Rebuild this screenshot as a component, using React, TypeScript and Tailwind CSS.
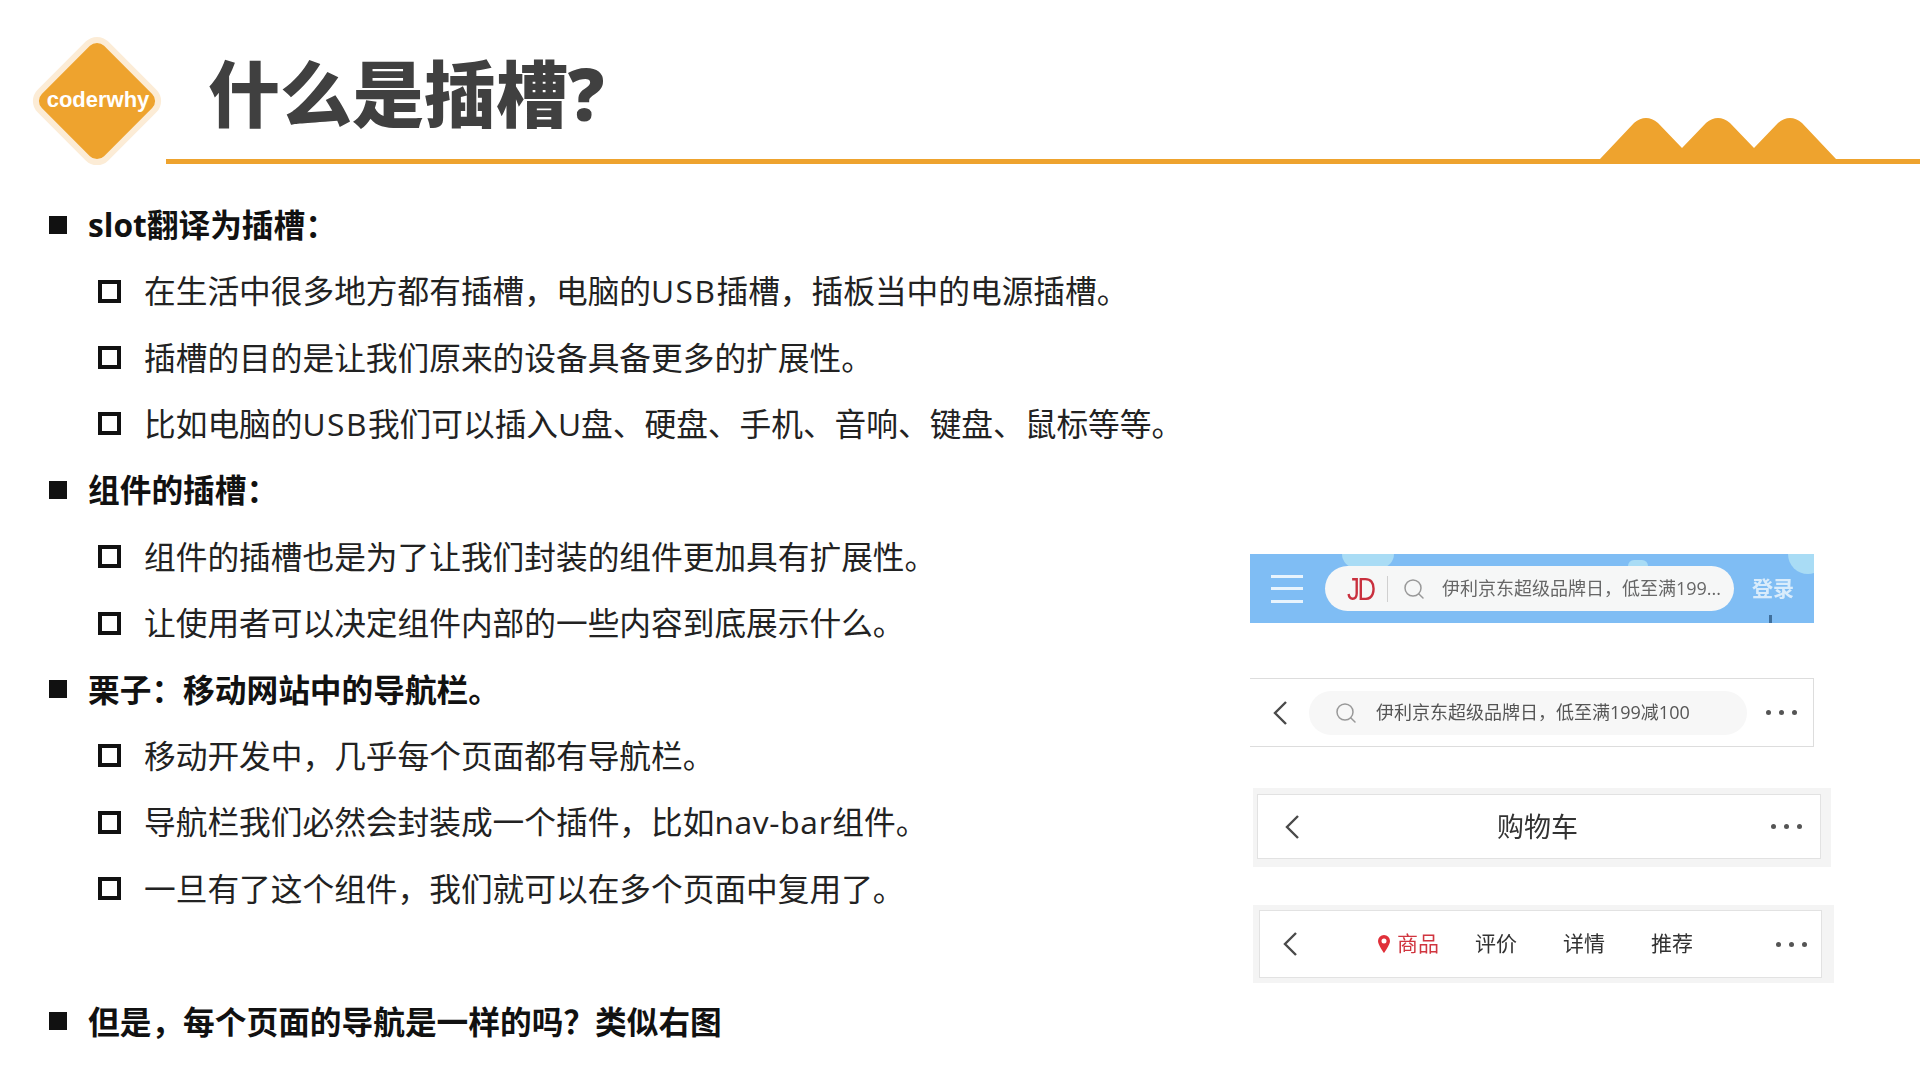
import type { ReactNode } from 'react'
import { Search } from 'lucide-react'

const cjk = "font-['Open_Sans','Noto_Sans_CJK_SC',sans-serif]"

const Dots = () => (
  <div className="flex gap-[8px]">
    {Array.from({ length: 3 }).map((_, i) => (
      <div key={i} className="h-[5px] w-[5px] rounded-full bg-[#555]" />
    ))}
  </div>
)

const Back = () => (
  <svg className="shrink-0" width="16" height="26" viewBox="0 0 16 26">
    <path d="M14 2 L3 13 L14 24" fill="none" stroke="#4a4a4a" strokeWidth="2.4" />
  </svg>
)

const Head = ({ children }: { children: ReactNode }) => (
  <div className="flex h-[66.4px] items-center pl-[49px]">
    <div className="h-[18px] w-[18px] bg-[#111]" />
    <div className="ml-[21px] text-[31.7px] font-bold text-[#111]">{children}</div>
  </div>
)

const Item = ({ children }: { children: ReactNode }) => (
  <div className="flex h-[66.4px] items-center pl-[98px]">
    <div className="h-[23px] w-[23px] border-[4px] border-[#111]" />
    <div className="ml-[23px] text-[31.7px] text-[#222]">{children}</div>
  </div>
)

export default function App() {
  return (
    <div className={`${cjk} h-[1080px] w-[1920px] overflow-hidden bg-white`}>
      {/* Header */}
      <div className="relative h-[163px]">
        <div className="flex items-start pt-[37px]">
          <div className="relative ml-[33px] flex h-[127px] w-[127px] items-center justify-center">
            <div className="absolute h-[100px] w-[100px] rotate-45 rounded-[16px] border-[6px] border-[#fcecd6] bg-[#eea32e]" />
            <div className="relative pb-[2px] pl-[3px] font-['Liberation_Sans',sans-serif] text-[22px] font-bold text-white">coderwhy</div>
          </div>
          <div className="ml-[48px] mt-[2px] text-[72px] leading-[108px] font-black text-[#404040]">什么是插槽?</div>
        </div>
        <div className="absolute bottom-[-1px] left-[166px] right-0 h-[5px] bg-[#eea32e]" />
        <svg className="absolute left-[1598px] top-[117px]" width="238" height="47" viewBox="0 0 238 47">
          <path
            d="M2 42 L36 6 Q48 -4 60 6 L84 31 L108 6 Q120 -4 132 6 L156 31 L180 6 Q192 -4 204 6 L238 42 V47 H2 Z"
            fill="#eea32e"
          />
        </svg>
      </div>

      {/* Content */}
      <div className="flex pt-[28.5px]">
        <div className="w-[1250px] shrink-0">
          <Head>slot翻译为插槽：</Head>
          <Item>在生活中很多地方都有插槽，电脑的<span className="tracking-[1.5px]">USB</span>插槽，插板当中的电源插槽。</Item>
          <Item>插槽的目的是让我们原来的设备具备更多的扩展性。</Item>
          <Item>比如电脑的<span className="tracking-[1.5px]">USB</span>我们可以插入U盘、硬盘、手机、音响、键盘、鼠标等等。</Item>
          <Head>组件的插槽：</Head>
          <Item>组件的插槽也是为了让我们封装的组件更加具有扩展性。</Item>
          <Item>让使用者可以决定组件内部的一些内容到底展示什么。</Item>
          <Head>栗子：移动网站中的导航栏。</Head>
          <Item>移动开发中，几乎每个页面都有导航栏。</Item>
          <Item>导航栏我们必然会封装成一个插件，比如<span className="tracking-[0.7px]">nav-bar</span>组件。</Item>
          <Item>一旦有了这个组件，我们就可以在多个页面中复用了。</Item>
          <div className="h-[66.4px]" />
          <Head>但是，每个页面的导航是一样的吗？类似右图</Head>
        </div>

        {/* Nav bar pictures */}
        <div className="flex w-[600px] flex-col pt-[362.5px] blur-[0.4px]">
          <div className="relative flex h-[69px] w-[564px] items-center overflow-hidden bg-[#7fbdf4] pl-[21px]">
            <div className="absolute left-[92px] top-[-14px] h-[28px] w-[52px] rounded-full bg-[#a9dcf5]" />
            <div className="absolute left-[378px] top-[6px] h-[12px] w-[20px] rounded-full bg-[#a9dcf5]" />
            <div className="absolute right-[-14px] top-[-20px] h-[40px] w-[40px] rounded-full bg-[#a9dcf5]" />
            <div className="absolute bottom-0 left-[519px] h-[8px] w-[3px] bg-[#3f6f9c]" />
            <div className="relative flex w-[32px] flex-col gap-[9.5px]">
              <div className="h-[3px] bg-[#e8f4fd]" />
              <div className="h-[3px] bg-[#e8f4fd]" />
              <div className="h-[3px] bg-[#e8f4fd]" />
            </div>
            <div className="relative ml-[22px] flex h-[45px] w-[409px] items-center rounded-full bg-[#f6f7f7] pl-[22px]">
              <div className="w-[29px] origin-left scale-x-[0.8] font-['Liberation_Sans',sans-serif] text-[32px] tracking-[-3px] text-[#c9303e]">JD</div>
              <div className="ml-[11px] h-[26px] w-px bg-[#d0d0d0]" />
              <Search className="ml-[14px] text-[#999]" size={24} strokeWidth={1.5} />
              <div className="ml-[16px] whitespace-nowrap text-[18px] text-[#666]">伊利京东超级品牌日，低至满199...</div>
            </div>
            <div className="relative ml-[18px] text-[21px] font-bold text-[#d9ecfb]">登录</div>
          </div>

          <div className="mt-[55px] flex h-[69px] w-[564px] items-center border-t border-r border-b border-[#ddd] pl-[22px]">
            <Back />
            <div className="ml-[21px] flex h-[44px] w-[438px] items-center rounded-full bg-[#f7f7f7] pl-[25px]">
              <Search className="text-[#999]" size={24} strokeWidth={1.5} />
              <div className="ml-[18px] whitespace-nowrap text-[18px] text-[#555]">伊利京东超级品牌日，低至满199减100</div>
            </div>
            <div className="ml-[19px]">
              <Dots />
            </div>
          </div>

          <div className="ml-[3px] mt-[41px] h-[79px] w-[578px] bg-[#f4f4f4] pl-[4px] pt-[6px]">
            <div className="flex h-[65px] w-[564px] items-center justify-between border border-[#e2e2e2] bg-white pl-[26px] pr-[18px]">
              <Back />
              <div className="ml-[4px] pt-[2px] text-[27px] text-[#333]">购物车</div>
              <Dots />
            </div>
          </div>

          <div className="ml-[3px] mt-[38px] h-[78px] w-[581px] bg-[#f4f4f4] pl-[6px] pt-[5px]">
            <div className="flex h-[68px] w-[563px] items-center border border-[#e2e2e2] bg-white pl-[22px] text-[21px] text-[#333]">
              <Back />
              <svg className="ml-[80px]" width="12" height="18" viewBox="0 0 12 18">
                <path
                  fillRule="evenodd"
                  d="M6 0a6 6 0 0 1 6 6c0 4-6 12-6 12S0 10 0 6a6 6 0 0 1 6-6Zm0 3.5a2.5 2.5 0 1 0 0 5 2.5 2.5 0 0 0 0-5Z"
                  fill="#e0303a"
                />
              </svg>
              <div className="ml-[7px] text-[#d0353f]">商品</div>
              <div className="ml-[36px]">评价</div>
              <div className="ml-[46px]">详情</div>
              <div className="ml-[46px]">推荐</div>
              <div className="ml-[83px]">
                <Dots />
              </div>
            </div>
          </div>
        </div>
      </div>
    </div>
  )
}
